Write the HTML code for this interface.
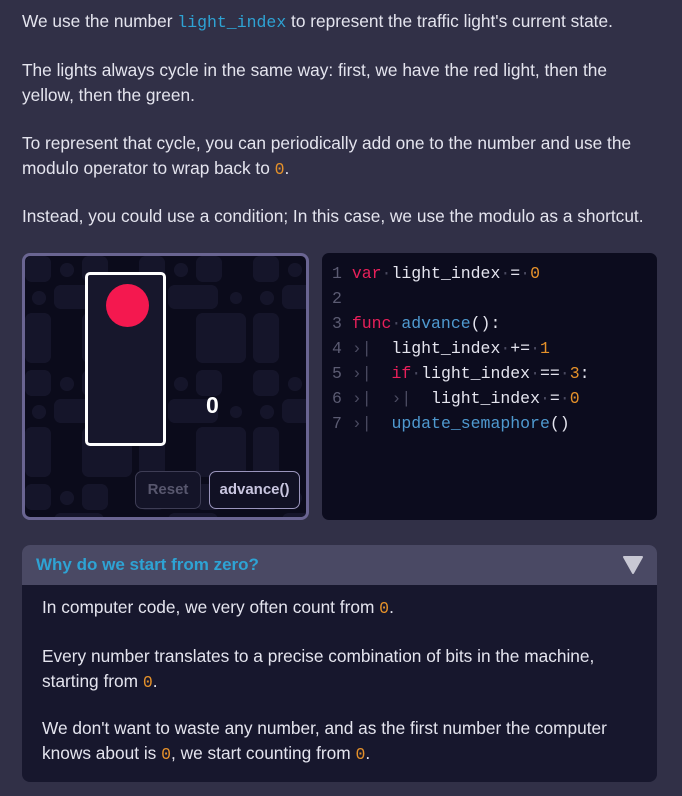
<!DOCTYPE html>
<html><head><style>
body{margin:0;background:#313047;width:682px;height:796px;overflow:hidden;font-family:"Liberation Sans",sans-serif;color:#e4e4ee;font-size:17.3px;}
p{margin:0;position:absolute;left:22px;line-height:24.5px;width:618px}
code{font-family:"Liberation Mono",monospace;font-size:16.5px}
.c{color:#2ea3d4}.o{color:#e5912a}
#demo{position:absolute;left:22px;top:253px;width:281px;height:261px;border:3px solid #6a6592;border-radius:8px;background:#0b0b1b;overflow:hidden}
#code{position:absolute;left:322px;top:253px;width:335px;height:267px;background:#0c0c1e;border-radius:7px;font-family:"Liberation Mono",monospace;font-size:16.5px;color:#e4e4ee}
.ln{position:absolute;left:10px;white-space:pre;line-height:25px}
.n{color:#5b5b72}.k{color:#e8205a}.f{color:#4f9ad0}.d{color:#4a4a60}
.btn{position:absolute;border-radius:7px;font-weight:bold;font-size:15px;text-align:center;line-height:36px}
#acc{position:absolute;left:22px;top:545px;width:635px;height:237px;border-radius:8px;overflow:hidden;background:#17172d}
#acch{height:40px;background:#4a4964;color:#2ea3d4;font-weight:bold;font-size:17px;line-height:40px;padding-left:14px;position:relative}
</style></head><body>
<p style="top:9px">We use the number <code class="c">light_index</code> to represent the traffic light's current state.</p>
<p style="top:58px">The lights always cycle in the same way: first, we have the red light, then the yellow, then the green.</p>
<p style="top:131px">To represent that cycle, you can periodically add one to the number and use the modulo operator to wrap back to <code class="o">0</code>.</p>
<p style="top:204px;width:660px">Instead, you could use a condition; In this case, we use the modulo as a shortcut.</p>
<div id="demo">
<svg width="281" height="261" style="position:absolute;left:0;top:0">
<defs><pattern id="p" width="114" height="114" patternUnits="userSpaceOnUse" x="-3" y="-3">
<rect x="3" y="3" width="26" height="26" rx="7" fill="#15152a"/><rect x="60" y="3" width="26" height="26" rx="7" fill="#15152a"/>
<rect x="32" y="32" width="50" height="24" rx="7" fill="#15152a"/><rect x="3" y="60" width="26" height="50" rx="7" fill="#15152a"/>
<rect x="60" y="60" width="50" height="50" rx="7" fill="#15152a"/><circle cx="45" cy="17" r="7" fill="#15152a"/><circle cx="17" cy="45" r="7" fill="#15152a"/>
<circle cx="100" cy="45" r="6" fill="#15152a"/></pattern></defs>
<rect width="281" height="261" fill="url(#p)"/></svg>
<div style="position:absolute;left:60px;top:16px;width:75px;height:168px;border:3px solid #fff;border-radius:5px;background:#17172c"></div>
<div style="position:absolute;left:81px;top:28px;width:43px;height:43px;border-radius:50%;background:#f4184f"></div>
<div style="position:absolute;left:181px;top:136px;color:#fff;font-weight:bold;font-size:23px">0</div>
<div class="btn" style="left:110px;top:215px;width:64px;height:36px;border:1.5px solid #3e3d55;color:#58576e;background:#141428">Reset</div>
<div class="btn" style="left:184px;top:215px;width:89px;height:36px;border:1.5px solid #9a95bc;color:#c9c6e0;background:#111124">advance()</div>
</div>
<div id="code">
<div class="ln" style="top:8px"><span class="n">1</span> <span class="k">var</span><span class="d">·</span>light_index<span class="d">·</span>=<span class="d">·</span><span class="o">0</span></div>
<div class="ln" style="top:33px"><span class="n">2</span></div>
<div class="ln" style="top:58px"><span class="n">3</span> <span class="k">func</span><span class="d">·</span><span class="f">advance</span>():</div>
<div class="ln" style="top:83px"><span class="n">4</span> <span class="d">›|</span>  light_index<span class="d">·</span>+=<span class="d">·</span><span class="o">1</span></div>
<div class="ln" style="top:108px"><span class="n">5</span> <span class="d">›|</span>  <span class="k">if</span><span class="d">·</span>light_index<span class="d">·</span>==<span class="d">·</span><span class="o">3</span>:</div>
<div class="ln" style="top:133px"><span class="n">6</span> <span class="d">›|</span>  <span class="d">›|</span>  light_index<span class="d">·</span>=<span class="d">·</span><span class="o">0</span></div>
<div class="ln" style="top:158px"><span class="n">7</span> <span class="d">›|</span>  <span class="f">update_semaphore</span>()</div>
</div>
<div id="acc">
<div id="acch">Why do we start from zero?
<svg width="22" height="20" style="position:absolute;right:13px;top:10px"><path d="M2 2H20L11 18Z" fill="#c8c8d4" stroke="#c8c8d4" stroke-width="2" stroke-linejoin="round"/></svg></div>
<p style="left:20px;top:50px">In computer code, we very often count from <code class="o">0</code>.</p>
<p style="left:20px;top:99px;width:585px">Every number translates to a precise combination of bits in the machine, starting from <code class="o">0</code>.</p>
<p style="left:20px;top:171px;width:585px">We don't want to waste any number, and as the first number the computer knows about is <code class="o">0</code>, we start counting from <code class="o">0</code>.</p>
</div>
</body></html>
